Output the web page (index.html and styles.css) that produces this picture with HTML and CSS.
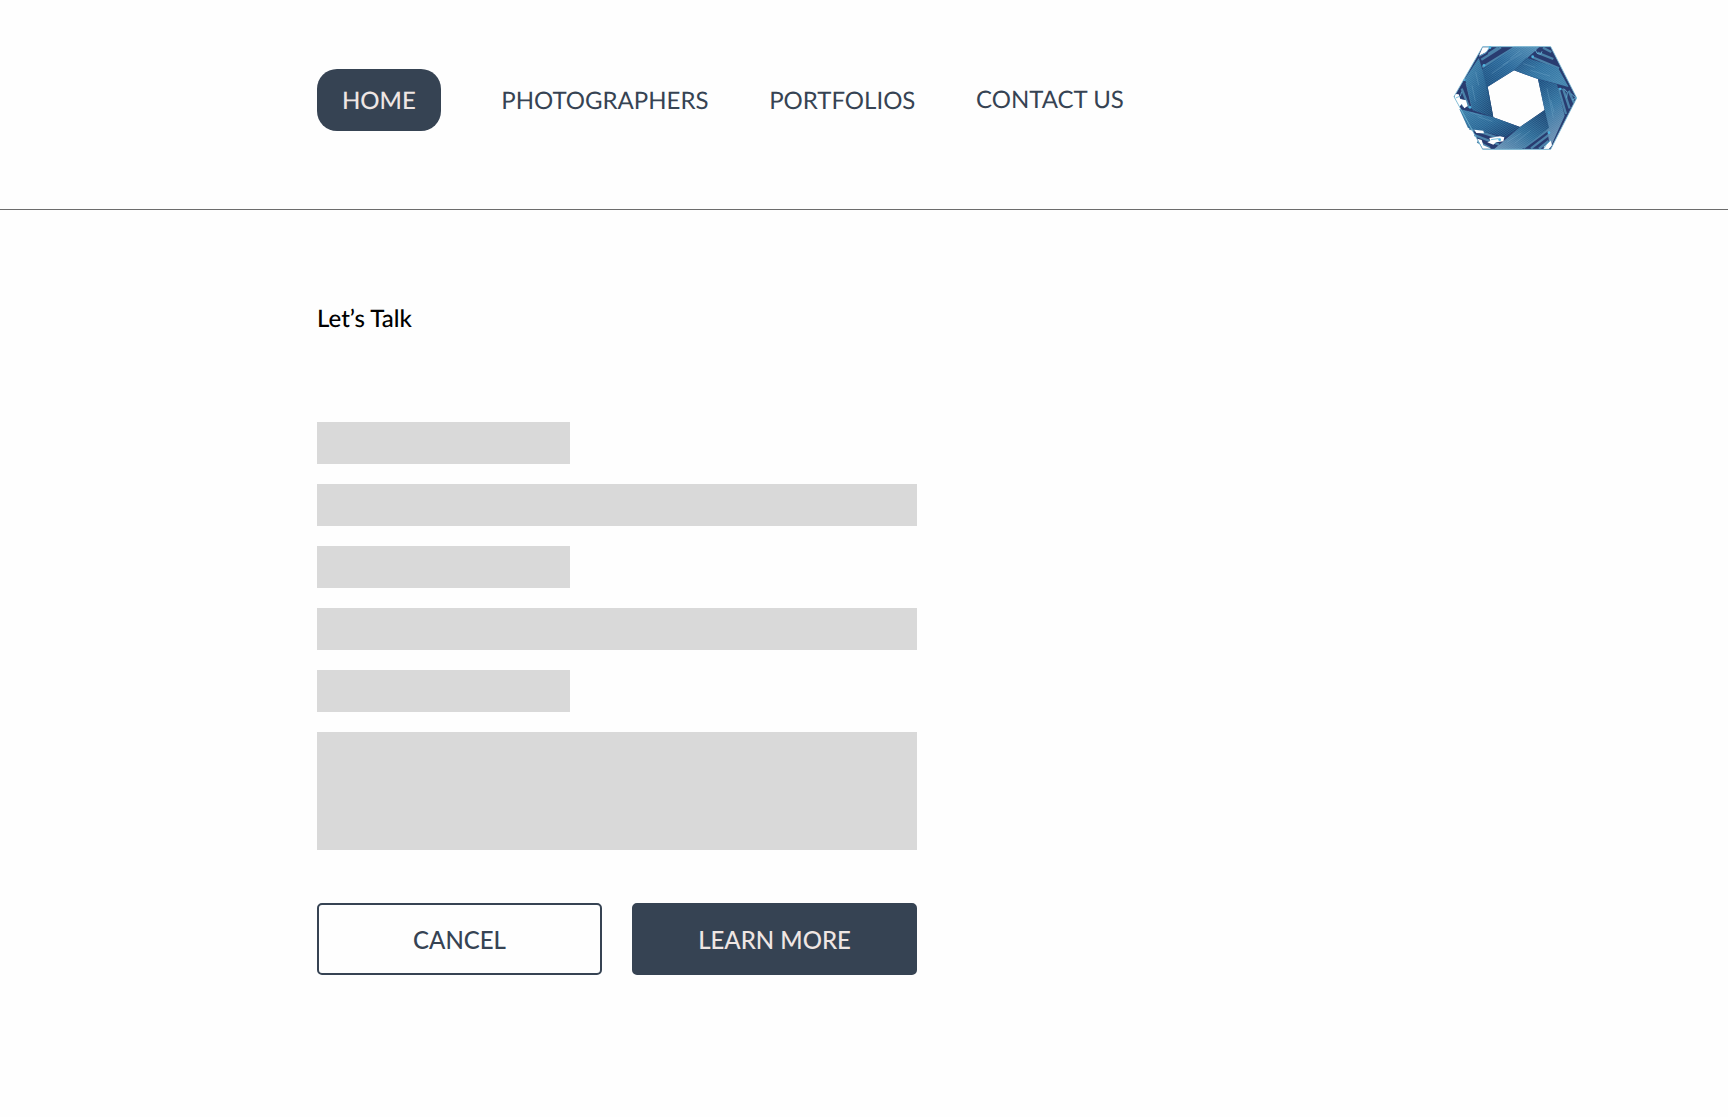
FILE: index.html
```html
<!DOCTYPE html>
<html lang="en">
<head>
<meta charset="utf-8">
<title>Let’s Talk</title>
<link rel="stylesheet" href="styles.css">
</head>
<body>
<header class="header">
  <nav class="nav">
    <a class="nav-link active">HOME</a>
    <a class="nav-link">PHOTOGRAPHERS</a>
    <a class="nav-link">PORTFOLIOS</a>
    <a class="nav-link contact">CONTACT US</a>
  </nav>
  <svg class="logo" viewBox="36 45 378 318" aria-label="Logo">
    <defs>
      <linearGradient id="a" x1="0" y1="1" x2="1" y2="0"><stop offset="0" stop-color="#174b7d"/><stop offset=".5" stop-color="#286699"/><stop offset="1" stop-color="#5690b6"/></linearGradient>
      <linearGradient id="b" x1="0" y1="0" x2="1" y2=".6"><stop offset="0" stop-color="#1b4a7d"/><stop offset=".5" stop-color="#2d6f9f"/><stop offset="1" stop-color="#4080ab"/></linearGradient>
      <linearGradient id="c" x1="0" y1="0" x2=".3" y2="1"><stop offset="0" stop-color="#16487b"/><stop offset=".5" stop-color="#3272a0"/><stop offset="1" stop-color="#7191b4"/></linearGradient>
      <linearGradient id="d" x1="1" y1="0" x2="0" y2="1"><stop offset="0" stop-color="#143c6c"/><stop offset=".5" stop-color="#2c6a97"/><stop offset="1" stop-color="#7196b8"/></linearGradient>
      <linearGradient id="e" x1="1" y1="1" x2="0" y2="0"><stop offset="0" stop-color="#123668"/><stop offset=".5" stop-color="#276595"/><stop offset="1" stop-color="#3c80ab"/></linearGradient>
      <linearGradient id="f" x1="1" y1="1" x2="0" y2="0"><stop offset="0" stop-color="#174270"/><stop offset=".5" stop-color="#276595"/><stop offset="1" stop-color="#478cb5"/></linearGradient>
      <pattern id="h" width="5" height="5" patternUnits="userSpaceOnUse" patternTransform="rotate(35)"><path d="M0 1H5" stroke="#8fc1da" stroke-width="1.3" opacity=".45"/></pattern>
    </defs>
    <path fill="#293c70" fill-rule="evenodd" d="M128 50H332L410 204 332 358H128L42 200ZM222 121 143 170 160 262 240 291 314 240 294 147Z"/>
    <g fill="none" stroke="#4c83aa" stroke-width="7">
      <path d="M124 89 183 52M127 112 222 53M145 72 174 53"/>
      <path d="M276 81 357 115M292 68 340 87M309 53 334 66"/>
      <path d="M355 174 378 252M369 176 389 235M386 182 402 218"/>
      <path d="M326 298 250 354M327 314 273 355M326 333 297 356"/>
      <path d="M88 295 180 325M103 315 177 344M112 335 150 354"/>
      <path d="M80 158 99 236M65 176 87 232M61 207 70 229"/>
    </g>
    <path fill="url(#a)" d="M222 50H299L222 121 143 170 126 118Z"/>
    <path fill="url(#f)" d="M116 84 143 170 160 262 98 241 75 146Z"/>
    <path fill="url(#b)" d="M259 83 354 113 386 171 294 147 222 121Z"/>
    <path fill="url(#c)" d="M294 147 351 163 374 257 330 355 314 240Z"/>
    <path fill="url(#d)" d="M314 240 327 293 245 358H162L240 291Z"/>
    <path fill="url(#e)" d="M58 237 160 262 240 291 197 322 84 294Z"/>
    <path fill="url(#h)" d="M75 146 118 83 160 262 98 241ZM222 50H299L222 121 143 170 126 118ZM259 83 354 113 386 171 222 121ZM294 147 351 163 374 257 330 355ZM314 240 327 293 245 358H162L240 291ZM58 237 160 262 240 291 197 322 84 294Z"/>
    <g fill="none" stroke="#82b5d2" stroke-width="1.5" opacity=".6">
      <path d="M155 131 205 96M188 105 245 70M211 86 240 62M250 101 285 112M271 121 330 138M321 175 340 263M332 210 342 247M201 336 242 310M224 340 271 302M113 260 157 274M91 247 127 258M107 126 116 166M96 167 106 214"/>
    </g>
    <g fill="#fefefe">
      <path d="M128 52H150L139 66 117 77Z"/>
      <path d="M46 192 56 193 61 207 78 211 83 228 73 235 65 222 58 231 43 203Z"/>
      <path d="M103 299 130 302 132 310 109 309ZM148 324 180 319 193 322 190 334 168 337 160 344 142 337 151 333ZM112 326 125 330 130 346 154 356H128Z"/>
      <path d="M312 350 332 332 336 346 326 358H311Z"/>
    </g>
    <path fill="none" stroke="#75b9d5" stroke-width="2.5" d="M128 50H332L410 204 332 358H128L42 200Z"/>
    <g fill="none" stroke="#68b6d9" stroke-width="2.5">
      <path d="M118 79 138 68 149 52M286 59 291 70 302 73 306 64M373 177 382 187 380 203M393 191 408 204 396 210M47 204 61 198 65 185M313 354 318 345 332 331M153 329 174 326 181 330"/>
    </g>
    <g fill="#4db3df"><circle cx="150" cy="53" r="4"/><circle cx="132" cy="106" r="4"/><circle cx="278" cy="80" r="4"/><circle cx="361" cy="177" r="4"/><circle cx="90" cy="232" r="4"/><circle cx="179" cy="329" r="4"/><circle cx="327" cy="308" r="4"/><circle cx="74" cy="150" r="3"/></g>
  </svg>
</header>
<main class="main">
  <h1 class="title">Let’s Talk</h1>
  <form class="form">
    <div class="block label"></div>
    <div class="block"></div>
    <div class="block label"></div>
    <div class="block"></div>
    <div class="block label"></div>
    <div class="block message"></div>
    <div class="actions">
      <button class="button outline" type="button">CANCEL</button>
      <button class="button" type="button">LEARN MORE</button>
    </div>
  </form>
</main>
</body>
</html>
```
FILE: styles.css
```css
* { box-sizing: border-box; }
body {
  margin: 0;
  background: #fefefe;
  color: #364353;
  font: 400 24px/29px Lato, sans-serif;
  text-rendering: geometricPrecision;
}
.header {
  display: flex;
  justify-content: space-between;
  align-items: flex-start;
  height: 210px;
  padding: 45px 150px 0 317.3px;
  border-bottom: 1px solid #6c6c6c;
}
.nav {
  display: flex;
  align-items: center;
  gap: 60.7px;
  height: 62px;
  margin-top: 24px;
}
.nav-link { white-space: nowrap; }
.active {
  padding: 16.5px 24.7px;
  border-radius: 20px;
  background: #364353;
  color: #efe6e3;
  font-weight: 500;
}
.contact { padding-bottom: 2px; }
.logo { width: 126px; height: 106px; }
.main { width: 917px; padding: 94px 0 0 317px; }
.title {
  margin: 0 0 89px;
  color: #000;
  font-size: 24px;
  line-height: 29px;
  font-weight: 500;
}
.form { display: flex; flex-direction: column; gap: 20px; }
.block { height: 42px; background: #d9d9d9; }
.label { width: 253px; }
.message { height: 118px; }
.actions { display: flex; gap: 30px; margin-top: 33px; }
.button {
  flex: 1;
  height: 72px;
  border: 2px solid #364353;
  border-radius: 5px;
  background: #364353;
  color: #efe6e3;
  font: 500 24px/29px Lato, sans-serif;
}
.outline { background: #fefefe; color: #364353; }
```
